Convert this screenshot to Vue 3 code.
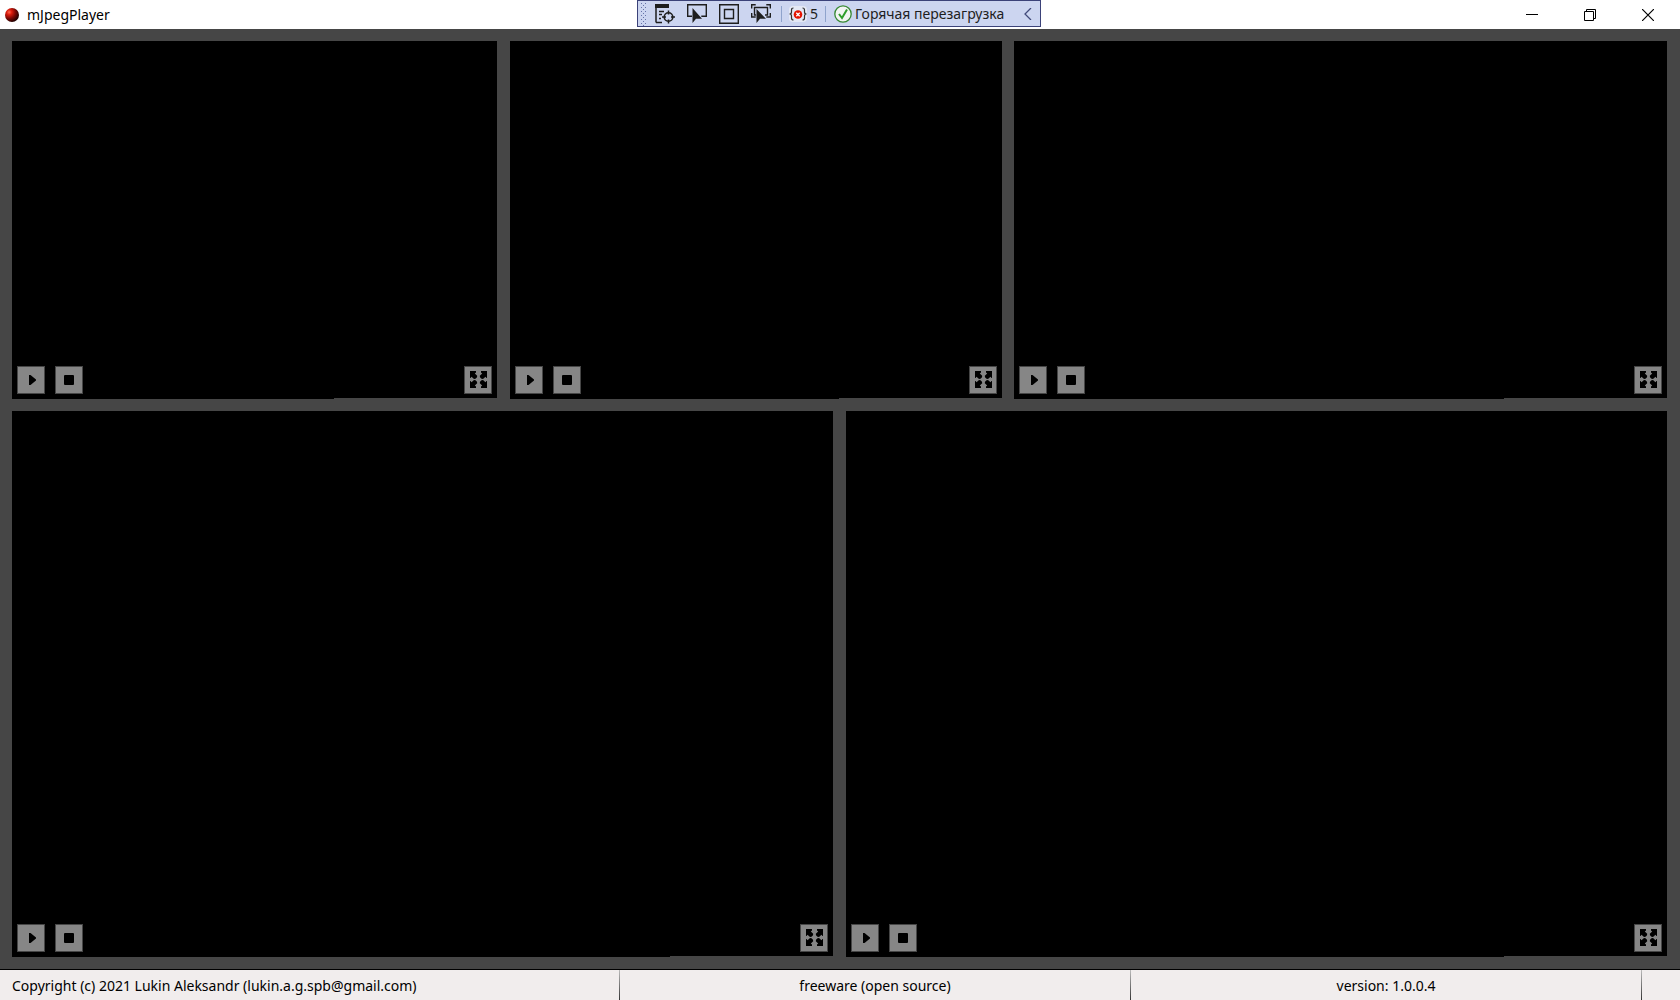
<script setup>
const rows = [
  { id: 'top', grow: 358, cameras: [
    { id: 1, grow: 475 },
    { id: 2, grow: 482 },
    { id: 3, grow: 643, narrow: true },
  ] },
  { id: 'bottom', grow: 546, cameras: [
    { id: 4, grow: 811 },
    { id: 5, grow: 811 },
  ] },
]
</script>

<template>
  <div class="window">
    <header class="titlebar">
      <div class="caption">
        <svg class="logo" width="14" height="14" viewBox="0 0 14 14" aria-hidden="true">
          <defs>
            <radialGradient id="ball" cx="0.3" cy="0.3" r="0.75">
              <stop offset="0" stop-color="#ff6a50" />
              <stop offset="0.25" stop-color="#dc1c0c" />
              <stop offset="0.6" stop-color="#7c0804" />
              <stop offset="1" stop-color="#1c0000" />
            </radialGradient>
          </defs>
          <circle cx="7" cy="7" r="7" fill="url(#ball)" />
        </svg>
        <h1>mJpegPlayer</h1>
      </div>

      <div class="debugbar" role="toolbar">
        <svg class="grip" width="8" height="24" viewBox="0 0 8 24" aria-hidden="true">
          <g fill="#6673a8">
            <template v-for="n in 6" :key="n">
              <rect x="1" :y="n * 4 - 3" width="1" height="1" />
              <rect x="5" :y="n * 4 - 3" width="1" height="1" />
              <rect x="3" :y="n * 4 - 1" width="1" height="1" />
            </template>
          </g>
        </svg>
        <button class="tool" type="button" aria-label="Live visual tree">
          <svg width="20" height="20" viewBox="0 0 20 20">
            <path d="M0 0h14v4H0z" fill="#1e1e1e" />
            <path d="M1 4v14.500M1 18.500h6M4 7.500h5M4 10.500h3M4 14.500h2" fill="none" stroke="#1e1e1e" stroke-width="1.500" />
            <circle cx="13.500" cy="13" r="4.300" fill="none" stroke="#1e1e1e" stroke-width="1.600" />
            <path d="M13.500 6.500v4M13.500 15.500v4M7 13h4M16 13h4" stroke="#1e1e1e" stroke-width="1.500" />
          </svg>
        </button>
        <button class="tool" type="button" aria-label="Select element">
          <svg width="20" height="20" viewBox="0 0 20 20">
            <path d="M5 12.200H.7V.7h18.600v11.500h-5" fill="none" stroke="#1e1e1e" stroke-width="1.400" />
            <path d="M5.500 4v15l3.500-4.200h6z" fill="#1e1e1e" />
          </svg>
        </button>
        <button class="tool" type="button" aria-label="Display layout adorners">
          <svg width="20" height="20" viewBox="0 0 20 20">
            <path d="M.7.700h18.600v18.600H.7zM5.500 5.500h9v9h-9z" fill="none" stroke="#1e1e1e" stroke-width="1.400" />
          </svg>
        </button>
        <button class="tool" type="button" aria-label="Track focused element">
          <svg width="20" height="20" viewBox="0 0 20 20">
            <path d="M.7 4.500V.7h4M15.300.7h4v3.800M19.300 9v4h-4M4.700 13h-4V9M5 11H3.500V3.500H16.500V11H14" fill="none" stroke="#1e1e1e" stroke-width="1.400" />
            <path d="M5.500 5v14l3.500-4.200h6z" fill="#1e1e1e" />
          </svg>
        </button>
        <span class="divider first"></span>
        <button class="errors" type="button">
          <svg width="18" height="16" viewBox="0 0 18 16" aria-hidden="true">
            <rect width="18" height="16" rx="4" fill="#e4e8f5" />
            <path d="M4.500 2Q2.500 2 2.500 4v2q0 2-2 2 2 0 2 2v2q0 2 2 2M13.500 2q2 0 2 2v2q0 2 2 2-2 0-2 2v2q0 2-2 2" fill="none" stroke="#333" stroke-width="1.200" />
            <circle cx="9" cy="8.500" r="4.300" fill="#e51400" />
            <path d="M7.300 6.800l3.400 3.400M10.700 6.800l-3.400 3.400" stroke="#fff" stroke-width="1.300" />
          </svg>
          <span>5</span>
        </button>
        <span class="divider"></span>
        <button class="reload" type="button">
          <svg width="18" height="18" viewBox="0 0 18 18" aria-hidden="true">
            <circle cx="9" cy="9" r="8.200" fill="#f2f5f2" stroke="#388a34" stroke-width="1.300" />
            <path d="M5 9l3 4 5-8.500" fill="none" stroke="#2f9e2b" stroke-width="2" />
          </svg>
          <span>Горячая перезагрузка</span>
        </button>
        <button class="collapse" type="button" aria-label="Collapse">
          <svg width="8" height="12" viewBox="0 0 8 12">
            <path d="M7 0L1 6l6 6" fill="none" stroke="#414a7a" stroke-width="1.300" />
          </svg>
        </button>
      </div>

      <div class="controls">
        <button type="button" aria-label="Minimize">
          <svg width="12" height="12" viewBox="0 0 12 12"><path d="M0 5.500h12" stroke="#000" /></svg>
        </button>
        <button type="button" aria-label="Restore">
          <svg width="12" height="12" viewBox="0 0 12 12">
            <path d="M.5 2.500h9v9h-9zM2.500 2.500v-2h9v9h-2" fill="none" stroke="#000" />
          </svg>
        </button>
        <button type="button" aria-label="Close">
          <svg width="12" height="12" viewBox="0 0 12 12"><path d="M0 0l12 12M12 0L0 12" stroke="#000" stroke-width="1.200" /></svg>
        </button>
      </div>
    </header>

    <main class="wall">
      <div v-for="row in rows" :key="row.id" class="row" :style="{ flexGrow: row.grow }">
        <template v-for="(camera, index) in row.cameras" :key="camera.id">
          <div v-if="index" class="splitter" :class="{ narrow: camera.narrow }"></div>
          <section class="camera" :style="{ flexGrow: camera.grow }">
            <div class="playback">
              <button class="square" type="button" aria-label="Play">
                <svg width="26" height="26" viewBox="0 0 26 26"><path d="M11 8v10h1.500l5.500-4.500v-1L12.500 8z" fill="#000" /></svg>
              </button>
              <button class="square" type="button" aria-label="Stop">
                <svg width="26" height="26" viewBox="0 0 26 26"><rect x="8" y="8" width="10" height="10" rx="1" fill="#000" /></svg>
              </button>
            </div>
            <button class="square" type="button" aria-label="Full screen">
              <svg width="26" height="26" viewBox="0 0 26 26">
                <defs>
                  <path :id="'arrow' + camera.id" d="M5 4h6v1.500L9.800 6.500l2.400 2.200-.2 1.500-1.500 1.500-1.500.3-2.500-2.300L5.500 11H5z" />
                </defs>
                <use :href="'#arrow' + camera.id" />
                <use :href="'#arrow' + camera.id" transform="matrix(-1 0 0 1 27 0)" />
                <use :href="'#arrow' + camera.id" transform="matrix(1 0 0 -1 0 25)" />
                <use :href="'#arrow' + camera.id" transform="matrix(-1 0 0 -1 27 25)" />
              </svg>
            </button>
            <i class="edge"></i>
          </section>
        </template>
      </div>
    </main>

    <footer class="status">
      <span class="copyright">Copyright (c) 2021 Lukin Aleksandr (lukin.a.g.spb@gmail.com)</span>
      <span class="license">freeware (open source)</span>
      <span class="version">version: 1.0.0.4</span>
      <span class="corner"></span>
    </footer>
  </div>
</template>

<style>
body {
  margin: 0;
}
</style>

<style scoped>
.window {
  display: flex;
  flex-direction: column;
  min-height: 100vh;
  background: #464646;
  color: #000;
  font-family: "Noto Sans", "Open Sans", sans-serif;
  font-size: 14px;
  line-height: 20px;
}

button {
  display: flex;
  align-items: center;
  justify-content: center;
  padding: 0;
  border: 0;
  background: none;
  color: inherit;
  font: inherit;
}

svg {
  display: block;
  flex: none;
}

.titlebar {
  display: grid;
  grid-template-columns: 1fr auto 1fr;
  height: 29px;
  background: #fff;
}

.caption {
  display: flex;
  align-items: center;
  gap: 8px;
  padding-left: 5px;
}

h1 {
  margin: 0;
  font-size: 14px;
  font-weight: 400;
}

.debugbar {
  display: flex;
  align-items: center;
  box-sizing: border-box;
  width: 404px;
  height: 27px;
  margin-right: 2px;
  border: 1px solid #3b4279;
  background: #ccd5f0;
  color: #1e1e1e;
}

.grip {
  margin: 0 1px 0 2px;
}

.tool {
  width: 32px;
  height: 24px;
}

.divider {
  width: 1px;
  height: 16px;
  background: #8fa3cc;
}

.divider.first {
  margin-left: 4px;
}

.errors {
  gap: 3px;
  width: 43px;
}

.reload {
  gap: 3px;
  margin-left: 8px;
  white-space: nowrap;
}

.collapse {
  margin: 0 8px 0 auto;
}

.controls {
  display: flex;
  justify-content: flex-end;
  padding-right: 3px;
}

.controls button {
  width: 58px;
}

.wall {
  display: flex;
  flex: 1;
  flex-direction: column;
  gap: 12px;
  padding: 12px 13px 12px 12px;
}

.row {
  display: flex;
  flex-basis: 0;
}

.splitter {
  width: 13px;
}

.splitter.narrow {
  width: 12px;
}

.camera {
  position: relative;
  display: flex;
  flex-basis: 0;
  align-items: flex-end;
  justify-content: space-between;
  padding: 5px;
  background: #000;
}

.playback {
  display: flex;
  gap: 10px;
}

.square {
  box-sizing: border-box;
  width: 28px;
  height: 28px;
  border: 1px solid #464646;
  background: #868686;
}

.edge {
  position: absolute;
  right: 0;
  bottom: 0;
  width: 163px;
  height: 1px;
  background: #464646;
}

.status {
  display: flex;
  height: 30px;
  border-top: 1px solid #000;
  background: #f1eded;
  line-height: 32px;
  text-align: center;
  white-space: nowrap;
}

.status span {
  box-sizing: border-box;
  height: 30px;
}

.status span + span {
  border-left: 1px solid;
  border-image: linear-gradient(#c0c0c0, #303030) 1;
}

.copyright {
  flex: 607 0 0;
  padding-left: 12px;
  text-align: left;
}

.license {
  flex: 510 0 0;
}

.version {
  flex: 510 0 0;
}

.corner {
  width: 39px;
}
</style>
